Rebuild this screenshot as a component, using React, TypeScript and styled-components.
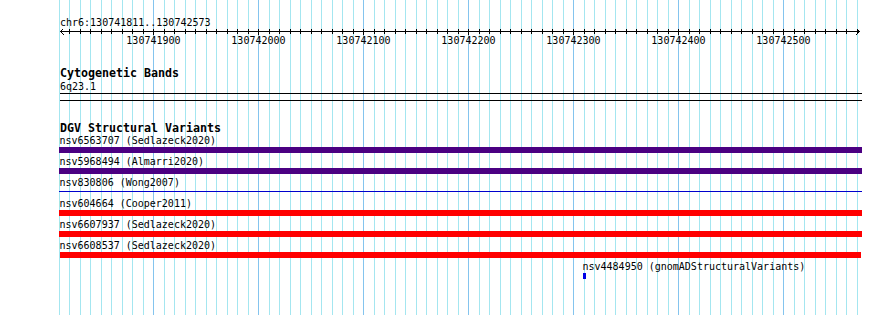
import styled, { createGlobalStyle } from "styled-components";

const START = 130741811;
const END = 130742573;
const LEFT = 60;
const SCALE = 1.05;
const WIDTH = 890;
const HEIGHT = 315;

const toX = (bp: number) => LEFT + (bp - START) * SCALE;
const crisp = (x: number) => Math.round(x) + 0.5;

type Feature = {
  name: string;
  source: string;
  x1: number;
  x2: number;
  color: string;
  kind: "bar" | "line";
};

const features: Feature[] = [
  { name: "nsv6563707", source: "Sedlazeck2020", x1: 59, x2: 862, color: "#4b0082", kind: "bar" },
  { name: "nsv5968494", source: "Almarri2020", x1: 59, x2: 862, color: "#4b0082", kind: "bar" },
  { name: "nsv830806", source: "Wong2007", x1: 59, x2: 862, color: "#0000cc", kind: "line" },
  { name: "nsv604664", source: "Cooper2011", x1: 59, x2: 862, color: "#ff0000", kind: "bar" },
  { name: "nsv6607937", source: "Sedlazeck2020", x1: 59, x2: 862, color: "#ff0000", kind: "bar" },
  { name: "nsv6608537", source: "Sedlazeck2020", x1: 60, x2: 861, color: "#ff0000", kind: "bar" },
  { name: "nsv4484950", source: "gnomADStructuralVariants", x1: 583, x2: 586, color: "#0000e6", kind: "bar" },
];

const gridStops: number[] = [];
for (let bp = Math.floor(START / 10) * 10; bp <= END; bp += 10) gridStops.push(bp);

const GlobalStyle = createGlobalStyle`
  html, body {
    margin: 0;
    padding: 0;
    background: #ffffff;
  }
`;

const Canvas = styled.div`
  position: relative;
  width: ${WIDTH}px;
  height: ${HEIGHT}px;
  overflow: hidden;
  background: #ffffff;
  font-family: "DejaVu Sans Mono", "Liberation Mono", monospace;
  color: #000000;
`;

const GridLayer = styled.svg`
  position: absolute;
  top: 0;
  left: 0;
  z-index: 0;
`;

const Tracks = styled.div`
  position: relative;
  z-index: 1;
  display: flex;
  flex-direction: column;
  padding-top: 16px;
`;

const Label = styled.div`
  font-size: 10px;
  line-height: 13px;
  height: 13px;
  padding-left: ${LEFT}px;
  white-space: pre;
`;

const RulerRow = styled.div`
  position: relative;
  height: 16px;
`;

const RulerSvg = styled.svg`
  position: absolute;
  top: 0;
  left: 0;
`;

const TickLabel = styled.span`
  position: absolute;
  top: 5px;
  font-size: 10px;
  line-height: 13px;
  transform: translateX(-50%);
  white-space: pre;
`;

const TrackTitle = styled.div<{ $gap: number; $height: number }>`
  margin-top: ${(p) => p.$gap}px;
  padding-left: ${LEFT}px;
  font-size: 11.63px;
  font-weight: bold;
  line-height: 13px;
  height: ${(p) => p.$height}px;
  white-space: pre;
`;

const BandLabel = styled.div`
  padding-left: ${LEFT}px;
  font-size: 10px;
  line-height: 12.5px;
  height: 12px;
`;

const Band = styled.div`
  margin-left: ${LEFT}px;
  width: 802px;
  height: 8px;
  box-sizing: border-box;
  border-top: 1px solid #000000;
  border-bottom: 1px solid #000000;
`;

const FeatureRow = styled.div`
  display: flex;
  flex-direction: column;
  padding-bottom: 3px;
`;

const FeatureLabel = styled.div`
  font-size: 10px;
  line-height: 12.5px;
  height: 12px;
  white-space: pre;
`;

const GlyphSlot = styled.div`
  height: 6px;
`;

const Glyph = styled.div<{ $kind: "bar" | "line"; $color: string }>`
  background: ${(p) => p.$color};
  height: ${(p) => (p.$kind === "bar" ? 6 : 1)}px;
  margin-top: ${(p) => (p.$kind === "bar" ? 0 : 2)}px;
`;

function Grid() {
  return (
    <GridLayer width={WIDTH} height={HEIGHT}>
      {gridStops.map((bp) => {
        const x = crisp(toX(bp));
        const major = bp % 100 === 0;
        return (
          <line
            key={bp}
            x1={x}
            x2={x}
            y1={0}
            y2={HEIGHT}
            stroke={major ? "#84c4ee" : "#a4e6f0"}
            strokeWidth={1}
          />
        );
      })}
    </GridLayer>
  );
}

function Ruler() {
  const y = 2.5;
  const right = 860;
  const ticks = gridStops.filter((bp) => bp > START);
  const majors = ticks.filter((bp) => bp % 100 === 0);
  return (
    <RulerRow>
      <RulerSvg width={WIDTH} height={16}>
        <g stroke="#000000" strokeWidth={1} fill="none" shapeRendering="crispEdges">
          <line x1={LEFT} x2={right} y1={y} y2={y} />
          {ticks.map((bp) => {
            const x = crisp(toX(bp));
            return <line key={bp} x1={x} x2={x} y1={0} y2={bp % 100 === 0 ? 6 : 5} />;
          })}
        </g>
        <g stroke="#000000" strokeWidth={1} fill="none">
          <polyline points={`${LEFT + 4},${y - 3.5} ${LEFT + 0.5},${y} ${LEFT + 4},${y + 3.5}`} />
          <polyline points={`${right - 4},${y - 3.5} ${right - 0.5},${y} ${right - 4},${y + 3.5}`} />
        </g>
      </RulerSvg>
      {majors.map((bp) => (
        <TickLabel key={bp} style={{ left: toX(bp) }}>
          {bp}
        </TickLabel>
      ))}
    </RulerRow>
  );
}

export default function App() {
  return (
    <>
      <GlobalStyle />
      <Canvas>
        <Grid />
        <Tracks>
          <Label>{`chr6:${START}..${END}`}</Label>
          <Ruler />

          <TrackTitle $gap={22} $height={14}>Cytogenetic Bands</TrackTitle>
          <BandLabel>6q23.1</BandLabel>
          <Band />

          <TrackTitle $gap={21} $height={13}>DGV Structural Variants</TrackTitle>
          {features.map((f) => (
            <FeatureRow key={f.name}>
              <FeatureLabel style={{ paddingLeft: Math.max(f.x1, LEFT) - 0.5 }}>
                {`${f.name} (${f.source})`}
              </FeatureLabel>
              <GlyphSlot>
                <Glyph
                  $kind={f.kind}
                  $color={f.color}
                  style={{ marginLeft: f.x1, width: f.x2 - f.x1 }}
                />
              </GlyphSlot>
            </FeatureRow>
          ))}
        </Tracks>
      </Canvas>
    </>
  );
}
